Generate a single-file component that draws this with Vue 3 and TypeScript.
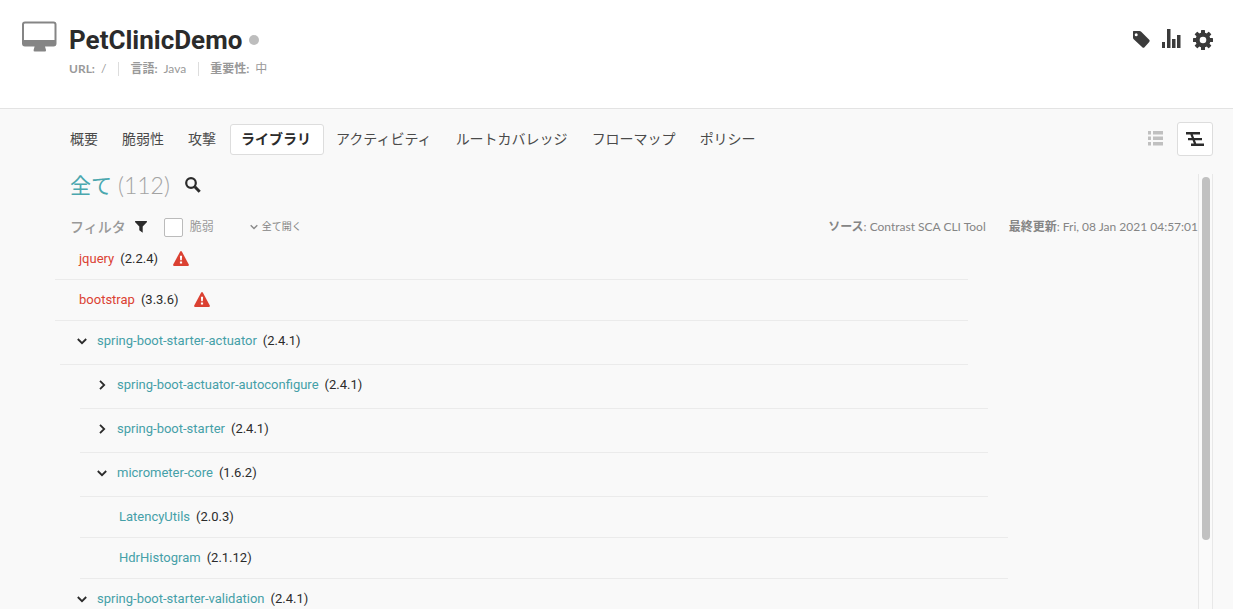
<script setup lang="ts">
import { ref } from 'vue'

interface Library {
  name: string
  version: string
  depth: number
  kind: 'root' | 'branch' | 'leaf'
  open?: boolean
  vulnerable?: boolean
}

const tabs: string[] = [
  '概要',
  '脆弱性',
  '攻撃',
  'ライブラリ',
  'アクティビティ',
  'ルートカバレッジ',
  'フローマップ',
  'ポリシー',
]
const activeTab = ref('ライブラリ')
const onlyVulnerable = ref(false)

const libraries = ref<Library[]>([
  { name: 'jquery', version: '2.2.4', depth: 0, kind: 'root', vulnerable: true },
  { name: 'bootstrap', version: '3.3.6', depth: 0, kind: 'root', vulnerable: true },
  { name: 'spring-boot-starter-actuator', version: '2.4.1', depth: 0, kind: 'branch', open: true },
  { name: 'spring-boot-actuator-autoconfigure', version: '2.4.1', depth: 1, kind: 'branch' },
  { name: 'spring-boot-starter', version: '2.4.1', depth: 1, kind: 'branch' },
  { name: 'micrometer-core', version: '1.6.2', depth: 1, kind: 'branch', open: true },
  { name: 'LatencyUtils', version: '2.0.3', depth: 2, kind: 'leaf' },
  { name: 'HdrHistogram', version: '2.1.12', depth: 2, kind: 'leaf' },
  { name: 'spring-boot-starter-validation', version: '2.4.1', depth: 0, kind: 'branch', open: true },
])

const teeth: number[] = [0, 45, 90, 135]
</script>

<template>
  <div class="page">
    <header class="header">
      <svg class="monitor" viewBox="0 0 36 31" aria-hidden="true">
        <path
          fill="#858585"
          fill-rule="evenodd"
          d="M3 0.5h28.500a3 3 0 0 1 3 3v19a3 3 0 0 1-3 3h-8.500l1 3.500q.3 1.500-1.200 1.500h-10q-1.500 0-1.200-1.500l1-3.500H3a3 3 0 0 1-3-3v-19a3 3 0 0 1 3-3zM3 2.500q-1 0-1 1v15.500h30.500v-15.500q0-1-1-1z"
        />
      </svg>
      <div class="identity">
        <div class="title-row">
          <h1 class="title">PetClinicDemo</h1>
          <span class="status-dot"></span>
        </div>
        <dl class="meta">
          <div class="meta-item"><dt>URL:</dt><dd>/</dd></div>
          <div class="meta-item"><dt>言語:</dt><dd>Java</dd></div>
          <div class="meta-item"><dt>重要性:</dt><dd>中</dd></div>
        </dl>
      </div>
      <div class="actions">
        <button type="button" class="icon-button" aria-label="タグ">
          <svg viewBox="0 0 20 22">
            <path
              fill="#3b3b3b"
              fill-rule="evenodd"
              d="M2.500 2h6q1 0 1.700.7l8 8q1.100 1.100 0 2.200l-4.700 5.300q-1.100 1.100-2.200 0l-8.600-8q-.7-.7-.7-1.700v-6q0-.5.500-.5zM5.200 4.200a1.500 1.500 0 1 0 0 3a1.500 1.500 0 0 0 0-3z"
            />
          </svg>
        </button>
        <button type="button" class="icon-button" aria-label="レポート">
          <svg viewBox="0 0 20 22">
            <path fill="#3b3b3b" d="M0 13h3v6H0zM5 0h3.500v19H5zM10 10h3.500v9H10zM15 6h3.500v13H15z" />
          </svg>
        </button>
        <button type="button" class="icon-button" aria-label="設定">
          <svg viewBox="0 0 20 22">
            <g fill="#3b3b3b">
              <rect
                v-for="angle in teeth"
                :key="angle"
                x="8"
                y="1"
                width="4"
                height="20"
                rx="0.6"
                :transform="`rotate(${angle} 10 11)`"
              />
              <circle cx="10" cy="11" r="7.500" />
            </g>
            <circle cx="10" cy="11" r="3.300" fill="#fff" />
          </svg>
        </button>
      </div>
    </header>

    <main class="main">
      <div class="toolbar">
        <nav class="tabs">
          <a
            v-for="tab in tabs"
            :key="tab"
            href="#"
            :class="['tab', { active: tab === activeTab }]"
            @click.prevent="activeTab = tab"
            >{{ tab }}</a
          >
        </nav>
        <div class="views">
          <button type="button" class="view" aria-label="リスト表示">
            <svg class="list-icon" viewBox="0 0 16 16">
              <path
                fill="#c0c0c0"
                d="M1 0h3v3.500H1zM6 0h10v3.500H6zM1 5.500h3V9H1zM6 5.500h10V9H6zM1 11h3v3.500H1zM6 11h10v3.500H6z"
              />
            </svg>
          </button>
          <button type="button" class="view selected" aria-label="ツリー表示">
            <svg class="tree-icon" viewBox="0 0 18 15">
              <path
                fill="#2b2b2b"
                d="M0 0h14v2.500H0zM2 6h14v2.300H2zM5 11.600h13v2.500H5zM3.800 1h2.400l4.600 12h-2.400z"
              />
            </svg>
          </button>
        </div>
      </div>

      <div class="panel">
        <div class="content">
          <div class="heading">
            <h2 class="all">全て</h2>
            <span class="count">(112)</span>
            <button type="button" class="search" aria-label="検索">
              <svg viewBox="0 0 16 16">
                <circle cx="6" cy="6" r="4.800" fill="none" stroke="#2b2b2b" stroke-width="2.200" />
                <path d="M9.800 9.800L14.700 14.700" stroke="#2b2b2b" stroke-width="3" />
              </svg>
            </button>
          </div>

          <div class="filters">
            <span class="filter-label">フィルタ</span>
            <svg class="funnel" viewBox="0 0 12 12" aria-hidden="true">
              <path fill="#2b2b2b" d="M.4 0h11.200q.7.500.2 1.200L7.700 5.600v6.200L4.300 9.300V5.600L.2 1.200Q-.3.500.4 0z" />
            </svg>
            <label class="check">
              <input v-model="onlyVulnerable" type="checkbox" />
              <span class="caption">脆弱</span>
            </label>
            <button type="button" class="expand">
              <svg class="expand-icon" viewBox="0 0 8 6">
                <path d="M.7 1.200L4 4.600L7.300 1.200" fill="none" stroke="#8a8a8a" stroke-width="1.400" />
              </svg>
              <span class="caption">全て開く</span>
            </button>
            <div class="source caption"><b>ソース</b>: Contrast SCA CLI Tool</div>
            <div class="updated caption"><b>最終更新</b>: Fri, 08 Jan 2021 04:57:01</div>
          </div>

          <ul class="tree">
            <li
              v-for="lib in libraries"
              :key="lib.name"
              :class="['row', lib.kind, `depth-${lib.depth}`]"
            >
              <button
                v-if="lib.kind === 'branch'"
                type="button"
                class="toggle"
                :aria-expanded="!!lib.open"
                :aria-label="lib.name"
                @click="lib.open = !lib.open"
              >
                <svg viewBox="0 0 10 10">
                  <path
                    :d="lib.open ? 'M.8 3L5 7.200L9.200 3' : 'M3 .8L7.200 5L3 9.200'"
                    fill="none"
                    stroke="#2b2b2b"
                    stroke-width="1.800"
                  />
                </svg>
              </button>
              <a href="#" :class="['name', { vulnerable: lib.vulnerable }]" @click.prevent>{{ lib.name }}</a>
              <span class="version">({{ lib.version }})</span>
              <svg v-if="lib.vulnerable" class="warning" viewBox="0 0 16 15" role="img" aria-label="脆弱">
                <path fill="#db4132" d="M7.200.5q.8-1 1.600 0l7 13q.4 1.500-.9 1.500H1.100Q-.2 15 .2 13.500z" />
                <path fill="#fff" d="M6.900 4.800h2.200l-.3 4.500H7.200zM6.900 10.500h2.200v2H6.900z" />
              </svg>
            </li>
          </ul>
        </div>
        <div class="track"><div class="thumb"></div></div>
      </div>
    </main>
  </div>
</template>

<style>
body {
  margin: 0;
  background: #f9f9f9;
}
</style>

<style scoped>
.page {
  display: flex;
  flex-direction: column;
  height: 100vh;
  overflow: hidden;
  background: #f9f9f9;
  color: #2b2b2b;
  font-family: Lato, 'Noto Sans CJK JP', sans-serif;
  font-size: 12px;
}

button {
  padding: 0;
  border: 0;
  background: none;
  font: inherit;
  color: inherit;
  cursor: pointer;
}

svg {
  display: block;
}

a {
  text-decoration: none;
}

.header {
  display: flex;
  align-items: flex-start;
  flex: none;
  box-sizing: border-box;
  height: 109px;
  padding: 21px 20px 0 22px;
  border-bottom: 1px solid #e3e3e3;
  background: #fff;
}

.monitor {
  width: 36px;
  height: 31px;
}

.identity {
  flex: 1;
  margin-left: 11px;
}

.title-row {
  display: flex;
  align-items: center;
  gap: 7px;
  height: 38px;
}

.title {
  margin: 0;
  font-family: Roboto, sans-serif;
  font-size: 26px;
  font-weight: 700;
  line-height: 38px;
}

.status-dot {
  width: 10px;
  height: 10px;
  border-radius: 50%;
  background: #bdbdbd;
}

.meta {
  display: flex;
  margin: 3px 0 0;
  line-height: 14px;
  color: #999;
}

.meta-item {
  display: flex;
  gap: 6px;
}

.meta-item + .meta-item {
  margin-left: 12px;
  padding-left: 11px;
  border-left: 1px solid #ddd;
}

.meta dt {
  font-weight: 700;
}

.meta dd {
  margin: 0;
}

.actions {
  display: flex;
  gap: 11px;
  padding-top: 8px;
}

.icon-button,
.icon-button svg {
  width: 20px;
  height: 22px;
}

.main {
  display: flex;
  flex-direction: column;
  flex: 1;
  min-height: 0;
  padding: 13px 20px 0 55px;
}

.toolbar {
  display: flex;
  align-items: center;
  justify-content: space-between;
  margin: 0 0 18px 3px;
}

.tabs {
  display: flex;
}

.tab {
  padding: 0 12px 2px;
  font-family: 'Noto Sans CJK JP', sans-serif;
  font-size: 14px;
  line-height: 27px;
  color: #4a4a4a;
  border: solid transparent;
  border-width: 1px 0;
}

.tab.active {
  padding: 0 12px 2px 10px;
  margin-left: 2px;
  border: 1px solid #ddd;
  border-radius: 3px;
  background: #fff;
  color: #2b2b2b;
  font-weight: 700;
}

.views {
  display: flex;
  gap: 4px;
}

.view {
  display: flex;
  align-items: center;
  justify-content: center;
  box-sizing: border-box;
  width: 36px;
  height: 34px;
}

.view.selected {
  border: 1px solid #ddd;
  border-radius: 3px;
  background: #fff;
}

.list-icon {
  width: 16px;
  height: 16px;
}

.tree-icon {
  width: 18px;
  height: 15px;
}

.panel {
  display: flex;
  flex: 1;
  min-height: 0;
}

.content {
  flex: 1;
  min-width: 0;
}

.heading {
  display: flex;
  align-items: center;
  height: 22px;
  margin-bottom: 19px;
  padding-left: 15px;
}

.all {
  margin: 0;
  padding-bottom: 2px;
  font-family: 'Noto Sans CJK JP', sans-serif;
  font-size: 21px;
  font-weight: 400;
  line-height: 32px;
  color: #4aa7ae;
}

.count {
  margin-left: 6px;
  padding-bottom: 1px;
  font-size: 23px;
  font-weight: 300;
  line-height: 32px;
  color: #a3a3a3;
}

.search {
  margin-left: 15px;
}

.search svg {
  width: 16px;
  height: 16px;
}

.filters {
  display: flex;
  align-items: center;
  height: 24px;
  padding-left: 15px;
  color: #858585;
  white-space: nowrap;
}

.filter-label {
  padding-bottom: 2px;
  font-family: 'Noto Sans CJK JP', sans-serif;
  font-size: 14px;
  font-weight: 500;
  color: #999;
}

.caption {
  padding-bottom: 3px;
}

.funnel {
  width: 12px;
  height: 12px;
  margin-left: 9px;
}

.check {
  display: flex;
  align-items: center;
  gap: 7px;
  margin-left: 17px;
  color: #999;
}

.check input {
  appearance: none;
  box-sizing: border-box;
  width: 19px;
  height: 19px;
  margin: 0;
  border: 1px solid #bbb;
  border-radius: 2px;
  background: #fff;
}

.check input:checked {
  background: #3a9ea5;
}

.expand {
  display: flex;
  align-items: center;
  gap: 4px;
  margin-left: 36px;
  font-size: 10px;
}

.expand-icon {
  width: 8px;
  height: 6px;
}

.source {
  margin-left: auto;
}

.updated {
  margin-left: 23px;
}

.tree {
  margin: 0;
  padding: 0;
  list-style: none;
  font-family: Roboto, sans-serif;
  font-size: 13px;
}

.row {
  display: flex;
  align-items: center;
  box-sizing: border-box;
  height: 41px;
  margin-right: 230px;
  padding: 0 0 2px 24px;
  border-bottom: 1px solid #ebebeb;
}

.row.branch {
  height: 44px;
  margin-left: 5px;
  padding: 0 0 5px 17px;
}

.row.leaf {
  padding-left: 39px;
}

.row.depth-1 {
  margin-left: 25px;
  margin-right: 210px;
}

.row.depth-2 {
  margin-left: 25px;
  margin-right: 190px;
}

.toggle {
  width: 20px;
  padding-top: 2px;
}

.toggle svg {
  width: 10px;
  height: 10px;
}

.name {
  color: #45a0a8;
}

.name.vulnerable {
  color: #db4132;
}

.version {
  margin-left: 6px;
}

.warning {
  width: 16px;
  height: 15px;
  margin-left: 15px;
}

.track {
  box-sizing: border-box;
  width: 15px;
  padding: 3px 2px 0 3px;
  border: solid #e8e8e8;
  border-width: 0 1px;
  background: #fafafa;
}

.thumb {
  width: 8px;
  height: 84%;
  border-radius: 4px;
  background: #c1c1c1;
}
</style>
